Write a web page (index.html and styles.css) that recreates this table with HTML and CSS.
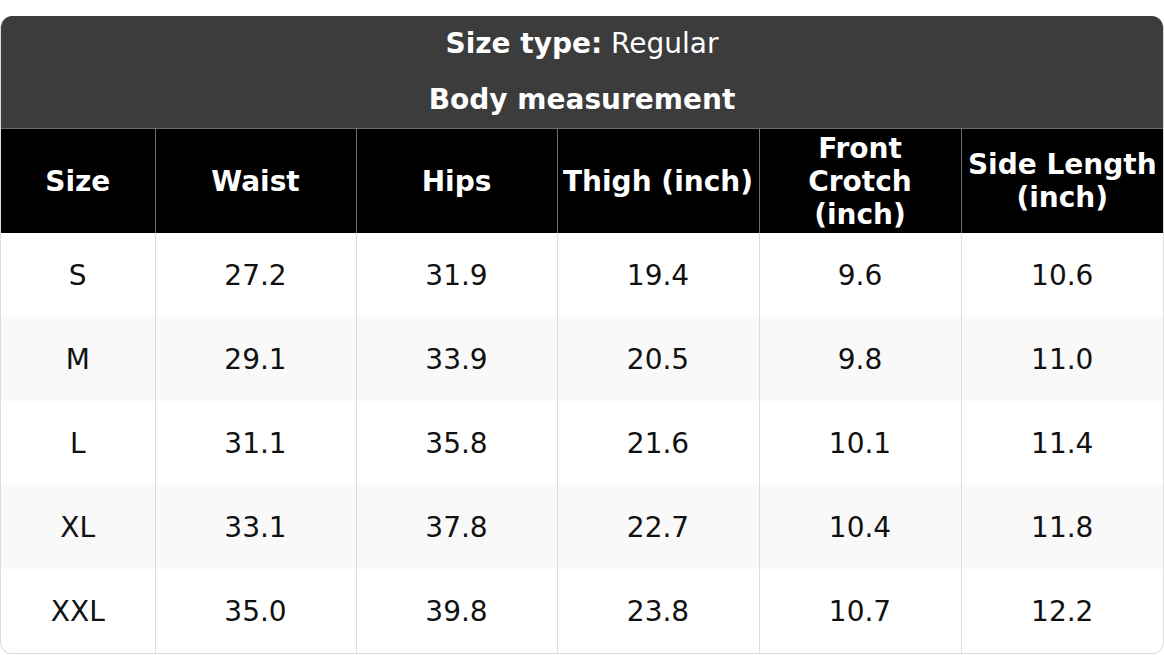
FILE: index.html
```html
<!DOCTYPE html>
<html>
<head>
<meta charset="utf-8">
<link rel="stylesheet" href="styles.css">
</head>
<body>
<div class="chart">
  <div class="chart-head">
    <div class="title-line"><strong>Size type:</strong> Regular</div>
    <div class="title-line"><strong>Body measurement</strong></div>
  </div>
  <table class="size-table">
    <colgroup>
      <col class="c-size"><col class="c-mid"><col class="c-mid"><col class="c-wide"><col class="c-wide"><col class="c-wide">
    </colgroup>
    <thead>
      <tr>
        <th>Size</th><th>Waist</th><th>Hips</th><th>Thigh (inch)</th><th>Front Crotch (inch)</th><th>Side Length (inch)</th>
      </tr>
    </thead>
    <tbody>
      <tr><td>S</td><td>27.2</td><td>31.9</td><td>19.4</td><td>9.6</td><td>10.6</td></tr>
      <tr><td>M</td><td>29.1</td><td>33.9</td><td>20.5</td><td>9.8</td><td>11.0</td></tr>
      <tr><td>L</td><td>31.1</td><td>35.8</td><td>21.6</td><td>10.1</td><td>11.4</td></tr>
      <tr><td>XL</td><td>33.1</td><td>37.8</td><td>22.7</td><td>10.4</td><td>11.8</td></tr>
      <tr><td>XXL</td><td>35.0</td><td>39.8</td><td>23.8</td><td>10.7</td><td>12.2</td></tr>
    </tbody>
  </table>
</div>
</body>
</html>
```

FILE: styles.css
```css
html, body {
  margin: 0;
  padding: 0;
  background: #fff;
}
body {
  padding-top: 16px;
  font-family: "DejaVu Sans", sans-serif;
  font-size: 28px;
  color: #111;
}
.chart {
  width: 1164px;
  box-sizing: border-box;
  border: 1px solid #dcdcdc;
  border-top: none;
  border-radius: 12px;
  overflow: hidden;
}
.chart-head {
  background: #3c3c3c;
  color: #fff;
  text-align: center;
  border-bottom: 1px solid #6a6a6a;
}
.title-line {
  height: 56px;
  line-height: 56px;
  font-weight: normal;
}
.title-line strong {
  font-weight: bold;
}
.size-table {
  width: 100%;
  border-collapse: collapse;
  table-layout: fixed;
}
.c-size { width: 154px; }
.c-mid { width: 201px; }
.c-wide { width: 202px; }
.size-table th {
  background: #000;
  color: #fff;
  font-weight: bold;
  height: 104px;
  padding: 0 4px;
  box-sizing: border-box;
  border-left: 1px solid #6e6e6e;
  text-align: center;
  vertical-align: middle;
  line-height: normal;
}
.size-table th:first-child {
  border-left: none;
}
.size-table td {
  height: 84px;
  padding: 0;
  text-align: center;
  vertical-align: middle;
  border-left: 1px solid #dcdcdc;
  color: #111;
}
.size-table td:first-child {
  border-left: none;
}
.size-table tbody tr:nth-child(even) td {
  background: #f9f9f9;
}
```
